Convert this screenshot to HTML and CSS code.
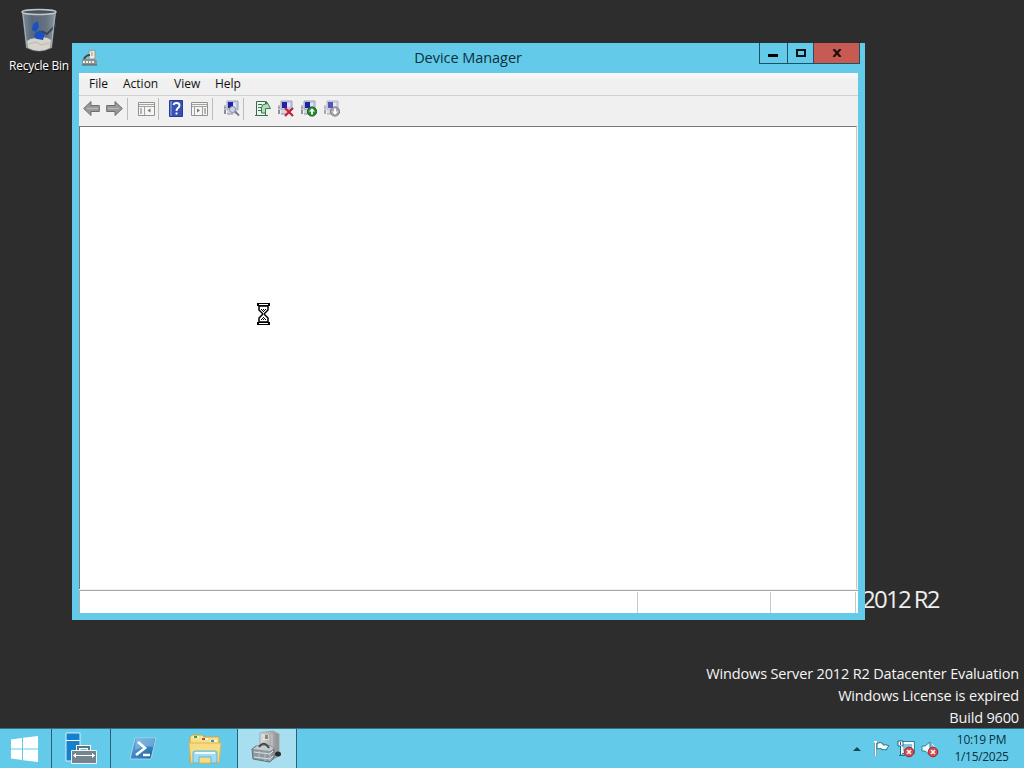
FILE: index.html
```html
<!DOCTYPE html>
<html lang="en">
<head>
  <meta charset="UTF-8">
  <title>Device Manager</title>
  <link rel="stylesheet" href="styles.css">
</head>
<body>
  <svg width="0" height="0" class="defs">
    <defs>
      <linearGradient id="glass" x1="0" x2="1"><stop offset="0" stop-color="#7c8b98"/><stop offset=".3" stop-color="#59697a"/><stop offset=".7" stop-color="#65727e"/><stop offset="1" stop-color="#8c989f"/></linearGradient>
      <linearGradient id="blue" x1="0" y1="0" x2="1" y2="1"><stop offset="0" stop-color="#6aaee0"/><stop offset="1" stop-color="#145ea4"/></linearGradient>
      <linearGradient id="folder" x1="0" y1="0" x2="0" y2="1"><stop offset="0" stop-color="#fbe392"/><stop offset="1" stop-color="#edc65c"/></linearGradient>
      <linearGradient id="metal" x1="0" x2="1"><stop offset="0" stop-color="#dededc"/><stop offset="1" stop-color="#8b8d90"/></linearGradient>
      <symbol id="device" viewBox="0 0 17 17">
        <path d="M1 5h2v9H1z" fill="#8d9097"/><path d="M1 6h2M1 9h2" stroke="#e8e8ee"/>
        <path d="M4 1h11v9H4z" fill="#bfc9e6" stroke="#a3a5b4"/>
        <path d="M5 2h5v6H5z" fill="#2021a4"/><path d="M10 3h3v4h-3z" fill="#dce4fa"/>
        <path d="M4 10h10v4H4z" fill="#d5d4df"/><path d="M4 14h6" stroke="#8d8d9a"/>
      </symbol>
    </defs>
  </svg>

  <div class="desktop">
    <div class="recycle-bin">
      <svg width="38" height="46" viewBox="0 0 38 46">
        <path d="M2 4l4 36q13 7 26 0l4-36z" fill="url(#glass)"/>
        <path d="M7 33q5-4 10-2 8-4 14 1l-1 8q-11 6-22 0z" fill="#d5d3ca"/>
        <path d="M9 36l7-2 5 3 8-2" stroke="#bbbab3" fill="none"/>
        <path d="M13 16l5-3 1 6-3 5-4-2zM15 25l5-3 5 3-2 7-6-1-3-3z" fill="#1d50c1"/>
        <path d="M36 17l-9 9-5-3" stroke="#34495b" stroke-width="2" fill="none"/>
        <ellipse cx="19" cy="4" rx="17" ry="2.500" fill="#4b5359" stroke="#c2c8ca" stroke-width="1.500"/>
        <path d="M3 6l4 34M35 6l-4 34" stroke="#a9b4b9" fill="none"/>
      </svg>
      <span>Recycle Bin</span>
    </div>

    <div class="branding">2012 R2</div>

    <div class="watermark">
      <div>Windows Server 2012 R2 Datacenter Evaluation</div>
      <div>Windows License is expired</div>
      <div>Build 9600</div>
    </div>

    <div class="window">
      <div class="titlebar">
        <svg class="title-icon" width="18" height="18" viewBox="0 0 18 18">
          <path d="M9 2l6-1v9H9z" fill="#ecece5" stroke="#96988f"/><path d="M11 4h2M11 6h2" stroke="#949689"/>
          <path d="M2 10h13l2 2v4H2z" fill="#8c918f"/><path d="M4 10q2-4 6-4" stroke="#404946" stroke-width="2" fill="none"/>
          <path d="M3 13h12" stroke="#eeeee8" stroke-width="2" stroke-dasharray="2 1"/><path d="M2 16h15" stroke="#555e60"/>
        </svg>
        <div class="title">Device Manager</div>
        <div class="controls">
          <div class="control min"><svg width="10" height="3"><path d="M0 0h10v3H0z"/></svg></div>
          <div class="control max"><svg width="10" height="8"><path d="M1 1h8v6H1z" fill="none" stroke="#071014" stroke-width="2"/></svg></div>
          <div class="control close"><svg width="10" height="8"><path d="M1.500 0L8.500 8M8.500 0L1.500 8" stroke="#1e1010" stroke-width="2.200"/></svg></div>
        </div>
      </div>

      <div class="client">
        <div class="menubar">
          <span class="menu-file">File</span>
          <span class="menu-action">Action</span>
          <span class="menu-view">View</span>
          <span class="menu-help">Help</span>
        </div>

        <div class="toolbar">
          <div class="group nav">
            <svg width="17" height="17" viewBox="0 0 17 17"><path d="M.7 8.500l7.300-7V5.500h8.300v6H8v4z" fill="#999" stroke="#6e6e6e"/><path d="M4 8.500h11" stroke="#bbb"/></svg>
            <svg width="17" height="17" viewBox="0 0 17 17"><path d="M16.300 8.500L9 1.500V5.500H.7v6H9v4z" fill="#999" stroke="#6e6e6e"/><path d="M2 8.500h11" stroke="#bbb"/></svg>
          </div>
          <div class="group tree">
            <svg width="17" height="17" viewBox="0 0 17 17"><path d="M.5 2.500h16v13H.5z" fill="#f5f5f3" stroke="#92928f"/><path d="M1 4.500h15M1 6.500h15M6.500 7v8" stroke="#a2a29f"/><path d="M2 9h3M2 11h3M2 13h3" stroke="#777" stroke-dasharray="2 1"/><path d="M12.500 8.500v4l-3-2z" fill="#777"/></svg>
          </div>
          <div class="group help">
            <svg width="14" height="17" viewBox="0 0 14 17"><path d="M.5.500h13v16H.5z" fill="#3852b2" stroke="#293d94"/><path d="M1 1h2v15H1z" fill="#6681cf"/><path d="M4.500 5q.5-2 3-2 3 0 3 2.500 0 1.500-2 3Q7.500 9.500 7.500 11M7.500 12.500v2" fill="none" stroke="#fff" stroke-width="1.900"/></svg>
            <svg width="17" height="17" viewBox="0 0 17 17"><path d="M.5 2.500h16v13H.5z" fill="#f5f5f3" stroke="#92928f"/><path d="M1 4.500h15M1 6.500h15M3.500 7v8M11.500 7v8" stroke="#a2a29f"/><path d="M13 9h3M13 11h3M13 13h3" stroke="#777" stroke-dasharray="2 1"/><path d="M6 8.500v4l3-2z" fill="#777"/></svg>
          </div>
          <div class="group scan">
            <svg width="17" height="17" viewBox="0 0 17 17"><use href="#device" width="17" height="17"/><circle cx="9.500" cy="9.500" r="3" fill="#ccd4df" stroke="#888f9b"/><path d="M12 11.500l4 4" stroke="#777b84" stroke-width="2"/></svg>
          </div>
          <div class="group actions">
            <svg width="17" height="17" viewBox="0 0 17 17"><path d="M2.500 1.500h9v14h-9z" fill="#edf5ee" stroke="#44634d"/><path d="M4 4.500h4M4 7.500h3M4 10.500h3M1 15.500h13" stroke="#39734d"/><path d="M7.500 13V8q0-4 4-4h1V1.500L14 4l2.500 4.500h-5V13z" fill="#b5dcbd" stroke="#337f4a"/></svg>
            <svg width="17" height="17" viewBox="0 0 17 17"><use href="#device" width="17" height="17"/><path d="M8 8l8 8M16 8l-8 8" stroke="#c71d34" stroke-width="2.200"/></svg>
            <svg width="17" height="17" viewBox="0 0 17 17"><use href="#device" width="17" height="17"/><circle cx="12" cy="11.500" r="4.600" fill="#218d2c" stroke="#145d20"/><path d="M12 8.200l3 3.300h-2v3h-2v-3H9z" fill="#fff"/></svg>
            <svg width="17" height="17" viewBox="0 0 17 17"><use href="#device" width="17" height="17" opacity=".75"/><circle cx="12" cy="11.500" r="4.600" fill="#a7a7ad" stroke="#7d7d83"/><path d="M12 14.800l3-3.300h-2v-3h-2v3H9z" fill="#fff"/></svg>
          </div>
        </div>

        <div class="tree-view"></div>

        <div class="statusbar">
          <div class="status-main"></div>
          <div class="status-second"></div>
          <div class="status-third"></div>
        </div>
      </div>
    </div>

    <!-- busy cursor -->
    <svg class="cursor" width="13" height="22" viewBox="0 0 13 22">
      <path d="M2 3v4l3.500 3.500v1L2 15v4h9v-4l-3.500-3.500v-1L11 7V3z" fill="#fff" stroke="#000" stroke-width="1.500"/>
      <path d="M0 0h13v3H0zM0 19h13v3H0z"/>
      <path d="M2 1.500h9M2 20.500h9" stroke="#fff"/>
      <path d="M4 6.500h1M6 6.500h1M8 6.500h1M5 7.500h1M7 7.500h1M6 8.500h1M6 14.500h1M5 15.500h1M7 15.500h1M4 16.500h1M6 16.500h1M8 16.500h1" stroke="#000"/>
    </svg>

    <div class="taskbar">
      <div class="task start">
        <svg width="28" height="26" viewBox="0 0 28 26" fill="#fff"><path d="M0 3.500L11 2v10.500H0zM12 1.800L27 0v12.500H12zM0 13.500h11V24L0 22.500zM12 13.500h15V26l-15-1.800z"/></svg>
      </div>
      <div class="task server">
        <svg width="34" height="34" viewBox="0 0 34 34">
          <path d="M2 1h14v28H2z" fill="#1480cf" stroke="#d4f0fa"/><path d="M2 8.500h14" stroke="#fff"/>
          <path d="M14 18v-3h11v3" fill="none" stroke="#fff" stroke-width="4"/><path d="M14 18v-3h11v3" fill="none" stroke="#62727c" stroke-width="2"/>
          <path d="M7.500 18.500h25v13h-25z" fill="#748590" stroke="#e9f4f7"/>
          <path d="M10 23.500h21" stroke="#fff"/><path d="M12 21l-3 2.500 3 2.500zM28 21l3 2.500-3 2.500z" fill="#fff"/>
        </svg>
      </div>
      <div class="task powershell">
        <svg width="28" height="24" viewBox="0 0 28 24"><path d="M6 1h21l-5 21H1z" fill="url(#blue)" stroke="#a3d6ee"/><path d="M7 2h19l-2 8q-7-2-18 3z" fill="#a5d4ef" opacity=".45"/><path d="M9 5l7 6-9 7M14 18h7" fill="none" stroke="#fff" stroke-width="2.600"/></svg>
      </div>
      <div class="task explorer">
        <svg width="34" height="30" viewBox="0 0 34 30">
          <path d="M2 3l2-2h10l2 2h15v26H2z" fill="url(#folder)" stroke="#c7a64d"/>
          <path d="M5 3h6M13 5h7M22 7h7" stroke="#fff7d0" stroke-width="2"/><path d="M6 3h3" stroke="#3a9b55" stroke-width="2"/><path d="M14 5h3" stroke="#b34836" stroke-width="2"/><path d="M23 7h3" stroke="#448bc0" stroke-width="2"/>
          <path d="M1 9h32l-2 20H3z" fill="#f7dc82" stroke="#d7b65b"/>
          <path d="M5 29V19q0-2 2-2h20q2 0 2 2v10h-6v-6H11v6z" fill="#9fdcf2" stroke="#5eb8dd"/><path d="M7 19h20" stroke="#edfbfd" stroke-width="2"/>
        </svg>
      </div>
      <div class="task active">
        <svg width="32" height="34" viewBox="0 0 32 34">
          <path d="M9 3l13-2 6 3v22l-7 4H9z" fill="url(#metal)" stroke="#a2a5a6"/><path d="M21 4v24" stroke="#c5c7c8"/>
          <path d="M12 6h6M12 9h6" stroke="#fff"/><path d="M14 5h3v4h-3z" fill="#8d8873"/>
          <ellipse cx="27" cy="24" rx="3" ry="2.500" fill="#252b30"/>
          <path d="M1 19l4-3h14l4 2v10l-4 4-17-3z" fill="#8c989e" stroke="#64727a"/>
          <path d="M2 19l4-3h13l4 2-4 3z" fill="#c5ccd0"/>
          <path d="M8 17q5-7 10 1" fill="none" stroke="#434b50" stroke-width="2"/>
          <path d="M3 22l16 2 3-3M3 27l16 2 3-3" fill="none" stroke="#dfe5e7"/><path d="M8 21v8M14 22v9M19 22v9" stroke="#b9c3c7"/>
        </svg>
      </div>
      <div class="tray">
        <svg class="arrow" width="8" height="4"><path d="M0 4l4-4 4 4z" fill="#17465b"/></svg>
        <svg class="flag" width="17" height="17" viewBox="0 0 17 17"><path d="M2.500 1v15M1 1.500h3" stroke="#326e85" stroke-width="3"/><path d="M2.500 1v15M1 1.500h3" stroke="#f7ffff" stroke-width="1.800"/><path d="M4 3.500q3-2 6 0v1.500q3-1 6 1-2 1-2.500 4-2-1-4.500 0V9q-2-1-5 0z" fill="#eefbff" stroke="#326e85"/></svg>
        <svg class="network" width="18" height="18" viewBox="0 0 18 18"><path d="M5 3h11v9H5z" fill="#7ac9e2" stroke="#28677d" stroke-width="3.400"/><path d="M5 3h11v9H5z" fill="#7ac9e2" stroke="#f4fdff" stroke-width="1.800"/><path d="M1 1h5v5H1z" fill="#fff" stroke="#28677d"/><path d="M3.500 2v3M3.500 6v9M2 15.500h6" stroke="#28677d"/><path d="M4.500 6v8" stroke="#fff"/><circle cx="12" cy="12" r="4.800" fill="#d44a4c" stroke="#a72832"/><path d="M10 10l4 4M14 10l-4 4" stroke="#fff" stroke-width="1.500"/></svg>
        <svg class="sound" width="18" height="18" viewBox="0 0 18 18"><path d="M1 6h3l5-4v13l-5-4H1z" fill="#effaff" stroke="#3d7d92"/><path d="M11 4q3 2 3 5" stroke="#eafaff" fill="none"/><circle cx="12" cy="12" r="4.800" fill="#d44a4c" stroke="#a72832"/><path d="M10 10l4 4M14 10l-4 4" stroke="#fff" stroke-width="1.500"/></svg>
        <div class="clock">
          <div class="time">10:19 PM</div>
          <div class="date">1/15/2025</div>
        </div>
      </div>
    </div>
  </div>
</body>
</html>
```
FILE: styles.css
```css
* {
  box-sizing: border-box;
}

body {
  margin: 0;
  overflow: hidden;
  font-family: "Open Sans", "Noto Sans", sans-serif;
  font-size: 12px;
}

svg {
  display: block;
  flex: none;
}

.defs {
  position: absolute;
}

.desktop {
  position: relative;
  width: 1024px;
  height: 768px;
  background: #2d2d2d;
}

.recycle-bin {
  position: absolute;
  left: 3px;
  top: 8px;
  width: 72px;
  display: flex;
  flex-direction: column;
  align-items: center;
  color: #fff;
  line-height: 18px;
  letter-spacing: -0.25px;
  white-space: nowrap;
  text-shadow: 1px 1px 1px #000;
}

.recycle-bin span {
  margin-top: 3px;
}

.branding {
  position: absolute;
  left: 862px;
  top: 582px;
  color: #eee;
  font-size: 24px;
  line-height: 34px;
  letter-spacing: -1.7px;
  word-spacing: -1px;
  white-space: nowrap;
}

.watermark {
  position: absolute;
  right: 5px;
  top: 663px;
  color: #f5f5f5;
  font-size: 14.5px;
  line-height: 22px;
  letter-spacing: -0.16px;
  text-align: right;
  white-space: nowrap;
}

.window {
  position: absolute;
  left: 72px;
  top: 43px;
  width: 793px;
  height: 577px;
  display: flex;
  flex-direction: column;
  padding: 0 7px 7px;
  background: #63cbe9;
}

.titlebar {
  display: flex;
  height: 29px;
  flex: none;
}

.title-icon {
  margin: 6px 0 0 1px;
}

.title {
  flex: 1;
  padding-left: 79px;
  text-align: center;
  font-size: 14.5px;
  line-height: 29px;
  letter-spacing: -0.05px;
  color: #0c303d;
}

.controls {
  display: flex;
  height: 21px;
  margin-right: -2px;
  border: 1px solid #1c5062;
  border-top: none;
}

.control {
  display: flex;
  align-items: center;
  justify-content: center;
}

.control + .control {
  border-left: 1px solid #1c5062;
}

.min {
  width: 27px;
}

.min svg {
  margin: 5px 1px 0 0;
}

.max {
  width: 26px;
}

.close {
  width: 46px;
  background: #c75b53;
}

.client {
  flex: 1;
  display: flex;
  flex-direction: column;
  margin-top: 1px;
  background: #f0f0f0;
}

.menubar {
  display: flex;
  height: 23px;
  padding-left: 10px;
  background: linear-gradient(#fbfbfb, #f0f0f0 7px);
  border-bottom: 1px solid #d0d0d0;
  line-height: 22px;
  color: #111;
}

.menu-file {
  width: 34px;
}

.menu-action {
  width: 51px;
}

.menu-view {
  width: 41px;
}

.toolbar {
  display: flex;
  height: 30px;
  padding: 2px 0 0 4px;
}

.group {
  display: flex;
  gap: 6px;
  height: 22px;
  padding-top: 2px;
  border-right: 1px solid #bcbcbc;
}

.nav {
  width: 45px;
}

.tree {
  width: 31px;
  padding-left: 10px;
}

.help {
  width: 54px;
  gap: 8px;
  padding-left: 10px;
}

.scan {
  width: 31px;
  padding-left: 10px;
}

.actions {
  padding-left: 10px;
  border: none;
}

.tree-view {
  flex: 1;
  margin-right: 1px;
  background: #fff;
  border: 1px solid #777;
  border-width: 1px 1px 0;
  border-right-color: #c8c8c8;
}

.statusbar {
  display: flex;
  height: 23px;
  margin-top: 1px;
  padding-right: 2px;
  background: #fff;
  border-top: 1px solid #a6a6a6;
  border-left: 1px solid #b0b0b0;
}

.statusbar div {
  margin-top: 1px;
  border-right: 1px solid #c9c9c9;
}

.status-main {
  width: 558px;
}

.status-second {
  width: 133px;
}

.status-third {
  flex: 1;
}

.cursor {
  position: absolute;
  left: 257px;
  top: 303px;
}

.taskbar {
  position: absolute;
  left: 0;
  bottom: 0;
  width: 100%;
  height: 40px;
  display: flex;
  background: #63cbe9;
  border-top: 1px solid #347386;
}

.task {
  display: flex;
  align-items: center;
  justify-content: center;
}

.start {
  width: 52px;
  padding-right: 2px;
  border-right: 1px solid #29627a;
}

.server {
  width: 59px;
  border-right: 1px solid #29627a;
}

.powershell {
  width: 64px;
}

.explorer {
  width: 62px;
  padding-right: 2px;
}

.active {
  width: 60px;
  background: #a7def0;
  border: 1px solid #29627a;
  border-width: 0 1px;
}

.active svg {
  margin-top: -3px;
}

.tray {
  margin-left: auto;
  display: flex;
  align-items: center;
  color: #0c303d;
}

.arrow {
  margin-right: 12px;
}

.flag {
  margin-right: 7px;
}

.network {
  margin-right: 6px;
}

.clock {
  width: 85px;
  padding-bottom: 1px;
  line-height: 17px;
  letter-spacing: -0.3px;
  text-align: center;
}
```
